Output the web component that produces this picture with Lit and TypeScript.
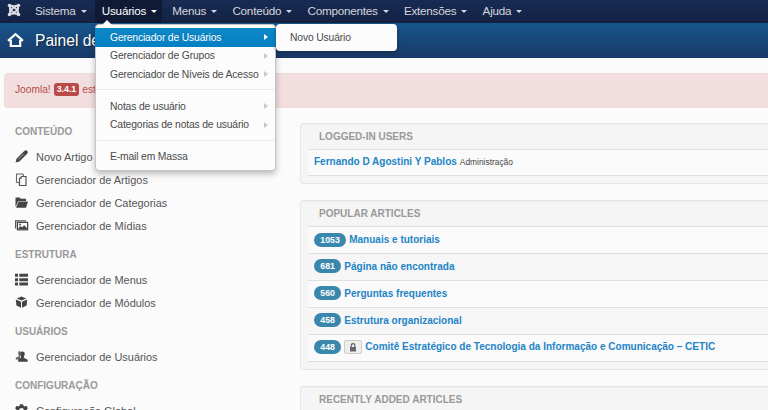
import { LitElement, html, css, svg } from "lit";
import { customElement, property } from "lit/decorators.js";
import { classMap } from "lit/directives/class-map.js";

const icons: Record<string, unknown> = {
  pencil: svg`<path d="M.5 12.500l1-3.800L9.300.9a1.900 1.900 0 0 1 2.900 2.800L4.400 11.500z" fill="#444"/><path d="M3.300 9.400l5.500-5.500" stroke="#aaa" stroke-width=".9"/>`,
  copy: svg`<path d="M1.500 9.500v-8.500h6l1 1v1.500M1.500 9.500h2.500" fill="none" stroke="#666" stroke-width="1.100"/><path d="M6.500 3.500h4.500v9h-6.500v-7z" fill="#fafafa" stroke="#555" stroke-width="1.200"/><path d="M4 6l2.800-2.800V6z" fill="#777"/>`,
  folder: svg`<path d="M.5 11V1.500h4.200l1 1.300H11V5H3.200z" fill="#444"/><path d="M3.500 5.600H13L11 11.800H1z" fill="#444"/>`,
  image: svg`<path d="M.6 9.500V1.800h10.500" fill="none" stroke="#555" stroke-width="1.200"/><rect x="2.400" y="3.400" width="10.200" height="7.400" fill="#fafafa" stroke="#444" stroke-width="1.200"/><path d="M3.500 10.200V9l2-2 1.500 1.400L9.200 6.200l2.600 2.700v1.300z" fill="#444"/><circle cx="5" cy="5.500" r=".9" fill="#444"/>`,
  list: svg`<path d="M0 .8h3v3H0zM4.300.8H13v3H4.300zM0 5.200h3v3H0zM4.300 5.200H13v3H4.300zM0 9.600h3v3H0zM4.300 9.600H13v3H4.300z" fill="#444"/>`,
  cube: svg`<path d="M6.500.5l4.700 1.900-4.700 2.100-4.700-2.100zM.8 3.500l5.200 2.300v6L1.400 9.400zM12.200 3.500L7 5.800v6l4.600-2.400z" fill="#444"/>`,
  users: svg`<path d="M5.400 1C3.600.8 3 2 3.200 3.500c.1 1 .8 1.600.7 2.700L.8 7.800V9.500h4z" fill="#666"/><path d="M7.400 1.400c1.800 0 2.500 1.200 2.300 3-.1 1.300-1 1.800-.9 3.300l3.900 2v2H3.200V9.500l2.800-2c0-1.500-.8-2-.9-3.300-.2-1.800.6-2.800 2.300-2.800z" fill="#444"/>`,
  gear: svg`<path d="M5 .2h3l.4 1.500 1.300.7 1.700-.6 1.500 2.500-1.200 1.200v1.600l1.200 1.200-1.500 2.500-1.700-.5-1.300.7L8 12.500H5l-.4-1.500-1.300-.7-1.700.5L.1 8.300l1.200-1.200V5.500L.1 4.300l1.500-2.500 1.700.6 1.300-.7z" fill="#444"/><circle cx="6.500" cy="6.300" r="2.400" fill="#fafafa"/>`,
};

const menus = ["Sistema", "Usuários", "Menus", "Conteúdo", "Componentes", "Extensões", "Ajuda"];

const sections: [string, [string, string][]][] = [
  ["CONTEÚDO", [["pencil", "Novo Artigo"], ["copy", "Gerenciador de Artigos"], ["folder", "Gerenciador de Categorias"], ["image", "Gerenciador de Mídias"]]],
  ["ESTRUTURA", [["list", "Gerenciador de Menus"], ["cube", "Gerenciador de Módulos"]]],
  ["USUÁRIOS", [["users", "Gerenciador de Usuários"]]],
  ["CONFIGURAÇÃO", [["gear", "Configuração Global"]]],
];

const articles = [
  { hits: 1053, title: "Manuais e tutoriais" },
  { hits: 681, title: "Página não encontrada" },
  { hits: 560, title: "Perguntas frequentes" },
  { hits: 458, title: "Estrutura organizacional" },
  { hits: 448, title: "Comitê Estratégico de Tecnologia da Informação e Comunicação – CETIC", locked: true },
];

const groups: [string, boolean][][] = [
  [["Gerenciador de Usuários", true], ["Gerenciador de Grupos", true], ["Gerenciador de Níveis de Acesso", true]],
  [["Notas de usuário", true], ["Categorias de notas de usuário", true]],
  [["E-mail em Massa", false]],
];

@customElement("user-menu")
export class UserMenu extends LitElement {
  static styles = css`
    :host { display: block; position: relative; width: 180px; font-size: 10.350px; letter-spacing: -0.16px; color: #4a4a4a; }
    .menu { box-sizing: border-box; width: 181px; height: 147px; padding: 3px 0; background: #fcfcfc; border: 1px solid #c4c4c8; border-radius: 4px; box-shadow: 0 3px 6px rgba(0,0,0,.25); }
    .arrow { position: absolute; left: 7px; top: -4px; width: 0; border: 5px solid transparent; border-top: 0; border-bottom: 5px solid #fcfcfc; }
    .item { display: flex; justify-content: space-between; align-items: center; height: 18.500px; padding: 0 7px 0 14px; white-space: nowrap; }
    .active { color: #fff; background: linear-gradient(#0d87c7, #0480c3); margin: 0 -1px; padding: 0 8px 0 15px; text-shadow: 0 -1px rgba(0,0,0,.15); }
    .caret { border: 3.500px solid transparent; border-left: 4px solid #c8c8c8; border-right: 0; }
    .active .caret { border-left-color: #fff; }
    .rule { height: 1px; margin: 5.500px 1px 7px; background: #e8e8e8; }
    .sub { position: absolute; left: 181px; top: 0; box-sizing: border-box; width: 121px; height: 27px; padding: 1px 0 0 14px; line-height: 26px; background: #fcfcfc; border-radius: 4px; box-shadow: 0 2px 4px rgba(0,0,0,.3); }
  `;
  render() {
    return html`<div class="menu">
        ${groups.map((g, gi) => html`${gi ? html`<div class="rule"></div>` : ""}
          ${g.map(([t, more], i) => html`<div class=${classMap({ item: true, active: !gi && !i })}><span>${t}</span>${more ? html`<span class="caret"></span>` : ""}</div>`)}`)}
      </div>
      <div class="arrow"></div>
      <div class="sub">Novo Usuário</div>`;
  }
}

@customElement("side-nav")
export class SideNav extends LitElement {
  static styles = css`
    :host { display: block; color: #555; font-size: 10.950px; }
    .head { height: 31px; box-sizing: border-box; padding-top: 2px; line-height: 29px; font-size: 10px; font-weight: bold; color: #999; }
    .row { display: flex; align-items: center; height: 23px; gap: 8px; white-space: nowrap; }
    .icon { width: 13px; height: 13px; flex: none; overflow: visible; margin-top: -2px; }
  `;
  render() {
    return sections.map(([name, rows]) => html`<div class="head">${name}</div>
      ${rows.map(([icon, label]) => html`<div class="row"><svg class="icon" viewBox="0 0 13 13">${icons[icon]}</svg><span>${label}</span></div>`)}`);
  }
}

@customElement("info-panel")
export class InfoPanel extends LitElement {
  @property() heading = "";
  static styles = css`
    :host { display: block; box-sizing: border-box; border: 1px solid #e6e6e6; border-radius: 3px; background: #f5f5f5; padding: 0 7px; box-shadow: inset 0 1px 1px rgba(0,0,0,.03); }
    .head { height: 25px; line-height: 26px; padding-left: 11px; font-size: 10px; font-weight: bold; color: #999; }
  `;
  render() {
    return html`<div class="head">${this.heading}</div><slot></slot>`;
  }
}

@customElement("app-root")
export class AppRoot extends LitElement {
  static styles = css`
    :host { display: block; position: relative; width: 768px; height: 410px; overflow: hidden; background: #fbfbfb; font-family: "Liberation Sans", Arial, sans-serif; }
    .nav { display: flex; height: 23px; background: linear-gradient(#172b53, #142142); color: #d4d6dc; font-size: 11.700px; letter-spacing: -0.23px; }
    .logo { width: 14px; height: 14px; margin: 3px 7px 0 7px; }
    .tab { display: flex; align-items: center; gap: 5px; padding: 0 5px 0 7px; height: 21px; margin-right: 3.200px; }
    .open { background: #101a35; color: #fff; height: 23px; box-sizing: border-box; padding-bottom: 2px; }
    .caret { border: 3px solid transparent; border-top-color: currentColor; border-bottom: 0; margin-top: 2px; }
    .title { display: flex; align-items: center; height: 35px; padding-left: 7px; gap: 11px; background: linear-gradient(#17568c, #1a3867); color: #fff; font-size: 15.600px; text-shadow: 1px 1px 1px rgba(0,0,0,.5); }
    .home { width: 17px; height: 16px; margin-top: -2px; }
    .alert { display: flex; align-items: center; height: 35px; margin: 15px -10px 0 4px; padding: 0 0 2px 10px; box-sizing: border-box; background: #f2dede; border: 1px solid #f0d9d9; border-radius: 4px; color: #b94a48; font-size: 10.200px; gap: 3.500px; }
    .version { background: #b94a48; color: #fff; font-size: 8.800px; font-weight: bold; line-height: 13px; padding: 0 2.500px; border-radius: 3px; }
    .body { display: grid; grid-template-columns: 285px 480px; padding: 6.500px 0 0 15px; }
    .panels { display: flex; flex-direction: column; gap: 16px; padding-top: 8.500px; margin-top: -.5px; }
    .row { display: flex; align-items: center; height: 26.850px; box-sizing: border-box; border-top: 1px solid #dfdfdf; padding: 0 0 1.500px 6px; gap: 3px; background: #fafafa; font-size: 10.030px; font-weight: bold; color: #2384c6; white-space: nowrap; }
    .row:nth-child(even) { background: #f6f6f6; }
    .end { height: 8px; box-sizing: border-box; border-top: 1px solid #dfdfdf; }
    .badge { background: #3a87ad; color: #fff; border-radius: 7px; height: 14px; line-height: 14px; padding: 0 6.300px; font-size: 8.800px; }
    .lock { display: flex; align-items: center; justify-content: center; box-sizing: border-box; width: 18px; height: 14px; border: 1px solid #ccc; border-radius: 2px; background: #eee; margin-top: 1px; }
    .role { color: #444; font-weight: normal; font-size: 8.400px; }
    .drop { position: absolute; left: 95px; top: 24px; }
  `;
  render() {
    return html`
      <div class="nav">
        <svg class="logo" viewBox="0 0 14 14" fill="none" stroke="#d9dbe0" stroke-width="2"><path d="M3 3.500Q5 2 7 4l4 4v3M11 3.500Q9 2 7 4L3 8v3M3 4v2l4.500 4.500L11 11M11 4v2l-4.500 4.500L3 11"/><g fill="#d9dbe0" stroke="none"><circle cx="2.500" cy="2.500" r="1.800"/><circle cx="11.500" cy="2.500" r="1.800"/><circle cx="2.500" cy="11.500" r="1.800"/><circle cx="11.500" cy="11.500" r="1.800"/></g></svg>
        ${menus.map((m, i) => html`<div class=${classMap({ tab: true, open: i === 1 })}><span>${m}</span><span class="caret"></span></div>`)}
      </div>
      <div class="title">
        <svg class="home" viewBox="0 0 17 16" fill="none" stroke="#fff" stroke-width="2.200"><path d="M1 8.800L8.500 2.200 16 8.800M3.800 8v6h9.400V8"/></svg>
        <span>Painel de</span>
      </div>
      <div class="alert"><span>Joomla!</span><span class="version">3.4.1</span><span>está</span></div>
      <div class="body">
        <side-nav></side-nav>
        <div class="panels">
          <info-panel heading="LOGGED-IN USERS">
            <div class="row"><span>Fernando D Agostini Y Pablos</span><span class="role">Administração</span></div>
            <div class="end"></div>
          </info-panel>
          <info-panel heading="POPULAR ARTICLES">
            ${articles.map(a => html`<div class="row"><span class="badge">${a.hits}</span>${a.locked ? html`<span class="lock"><svg width="8" height="9" viewBox="0 0 8 9"><path d="M2.200 4V2.500a1.800 1.800 0 0 1 3.600 0V4" fill="none" stroke="#666" stroke-width="1.200"/><rect x="1" y="4" width="6" height="4.500" fill="#666"/></svg></span>` : ""}<span>${a.title}</span></div>`)}
            <div class="end"></div>
          </info-panel>
          <info-panel heading="RECENTLY ADDED ARTICLES"><div class="row"></div></info-panel>
        </div>
      </div>
      <user-menu class="drop"></user-menu>`;
  }
}
